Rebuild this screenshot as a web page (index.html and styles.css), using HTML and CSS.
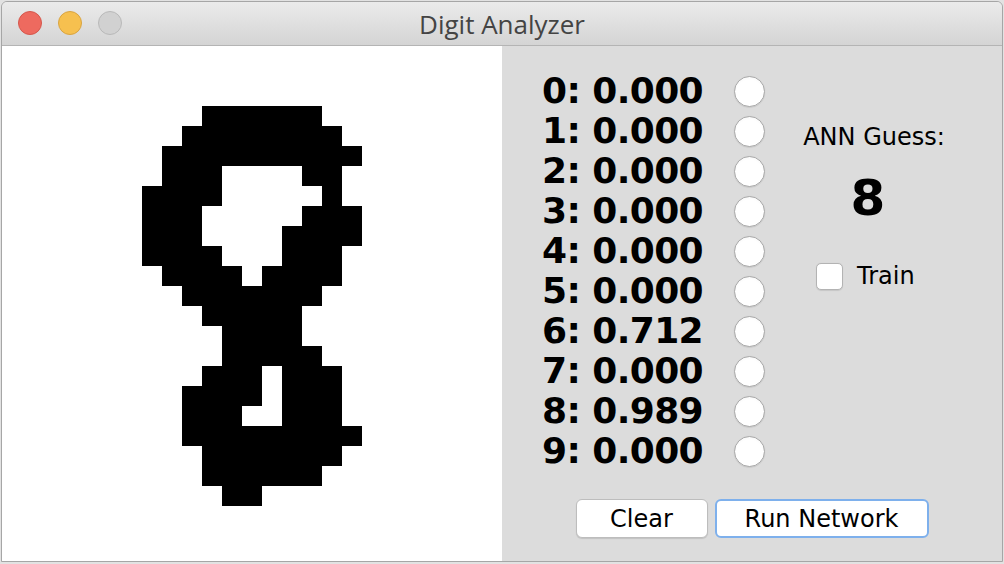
FILE: index.html
```html
<!DOCTYPE html>
<html>
<head>
<meta charset="utf-8">
<title>Digit Analyzer</title>
<link rel="stylesheet" href="styles.css">
</head>
<body>
<div class="window">
  <div class="titlebar">
    <div class="lights">
      <span class="light red"></span>
      <span class="light yellow"></span>
      <span class="light gray"></span>
    </div>
    <div class="title">Digit Analyzer</div>
  </div>
  <div class="content">
    <div class="canvas">
      <svg class="digit" width="500" height="515" viewBox="0 0 500 515">
        <g fill="#000">
          <rect x="200" y="60" width="120" height="20"/>
          <rect x="180" y="80" width="160" height="20"/>
          <rect x="160" y="100" width="200" height="20"/>
          <rect x="160" y="120" width="60" height="20"/>
          <rect x="300" y="120" width="40" height="20"/>
          <rect x="140" y="140" width="80" height="20"/>
          <rect x="320" y="140" width="20" height="20"/>
          <rect x="140" y="160" width="60" height="20"/>
          <rect x="300" y="160" width="60" height="20"/>
          <rect x="140" y="180" width="60" height="20"/>
          <rect x="280" y="180" width="80" height="20"/>
          <rect x="140" y="200" width="80" height="20"/>
          <rect x="280" y="200" width="60" height="20"/>
          <rect x="160" y="220" width="80" height="20"/>
          <rect x="260" y="220" width="80" height="20"/>
          <rect x="180" y="240" width="140" height="20"/>
          <rect x="200" y="260" width="100" height="20"/>
          <rect x="220" y="280" width="80" height="20"/>
          <rect x="220" y="300" width="100" height="20"/>
          <rect x="200" y="320" width="60" height="20"/>
          <rect x="280" y="320" width="60" height="20"/>
          <rect x="180" y="340" width="80" height="20"/>
          <rect x="280" y="340" width="60" height="20"/>
          <rect x="180" y="360" width="60" height="20"/>
          <rect x="280" y="360" width="60" height="20"/>
          <rect x="180" y="380" width="180" height="20"/>
          <rect x="200" y="400" width="140" height="20"/>
          <rect x="200" y="420" width="120" height="20"/>
          <rect x="220" y="440" width="40" height="20"/>
        </g>
      </svg>
    </div>
    <div class="panel">
      <div class="top">
        <div class="list">
          <div class="row"><span class="label">0: 0.000</span><span class="radio"></span></div>
          <div class="row"><span class="label">1: 0.000</span><span class="radio"></span></div>
          <div class="row"><span class="label">2: 0.000</span><span class="radio"></span></div>
          <div class="row"><span class="label">3: 0.000</span><span class="radio"></span></div>
          <div class="row"><span class="label">4: 0.000</span><span class="radio"></span></div>
          <div class="row"><span class="label">5: 0.000</span><span class="radio"></span></div>
          <div class="row"><span class="label">6: 0.712</span><span class="radio"></span></div>
          <div class="row"><span class="label">7: 0.000</span><span class="radio"></span></div>
          <div class="row"><span class="label">8: 0.989</span><span class="radio"></span></div>
          <div class="row"><span class="label">9: 0.000</span><span class="radio"></span></div>
        </div>
        <div class="side">
          <div class="guess-label">ANN Guess:</div>
          <div class="guess">8</div>
          <label class="check-row"><span class="checkbox"></span><span class="check-text">Train</span></label>
        </div>
      </div>
      <div class="buttons">
        <button class="btn clear">Clear</button>
        <button class="btn run">Run Network</button>
      </div>
    </div>
  </div>
</div>
</body>
</html>
```

FILE: styles.css
```css
html, body {
  margin: 0;
  padding: 0;
}
body {
  width: 1004px;
  height: 564px;
  background: #e2e2e2;
  overflow: hidden;
  font-family: "DejaVu Sans", "Liberation Sans", sans-serif;
}
.window {
  box-sizing: border-box;
  margin: 1px 0 0 1px;
  width: 1002px;
  height: 561px;
  border: 1px solid #a6a6a6;
  border-radius: 6px 6px 0 0;
  overflow: hidden;
  display: flex;
  flex-direction: column;
  background: #dcdcdc;
}
.titlebar {
  height: 43px;
  flex: none;
  border-bottom: 1px solid #b4b4b4;
  background: linear-gradient(#ebebeb, #d4d4d4);
  position: relative;
  display: flex;
  align-items: center;
  justify-content: center;
}
.lights {
  position: absolute;
  left: 16px;
  top: 9px;
  display: flex;
  gap: 16px;
}
.light {
  box-sizing: border-box;
  width: 24px;
  height: 24px;
  border-radius: 50%;
  display: block;
}
.light.red { background: #ee6a5f; border: 1px solid #d5574c; }
.light.yellow { background: #f6c04f; border: 1px solid #d9a441; }
.light.gray { background: #d1d1d1; border: 1px solid #b9b9b9; }
.title {
  font-family: "Open Sans", "Liberation Sans", sans-serif;
  font-size: 26px;
  color: #444;
  line-height: 30px;
  margin-top: 1px;
}
.content {
  flex: 1;
  display: flex;
}
.canvas {
  width: 500px;
  background: #fff;
  flex: none;
}
.digit { display: block; }
.panel {
  flex: 1;
  background: #dcdcdc;
  display: flex;
  flex-direction: column;
  padding-top: 25px;
}
.top {
  display: flex;
}
.list {
  margin-left: 40px;
  width: 224px;
}
.row {
  height: 40px;
  display: flex;
  align-items: center;
}
.label {
  width: 192px;
  font-weight: bold;
  font-size: 36px;
  line-height: 40px;
  letter-spacing: -0.6px;
  color: #000;
}
.radio {
  box-sizing: border-box;
  width: 31px;
  height: 31px;
  border-radius: 50%;
  border: 1px solid #a9a9a9;
  background: radial-gradient(circle at 50% 55%, #ffffff 60%, #efefef 100%);
  box-shadow: 0 0.5px 1px rgba(0,0,0,0.15);
}
.side {
  width: 216px;
  display: flex;
  flex-direction: column;
  align-items: center;
  padding-top: 52px;
}
.guess-label {
  font-size: 24px;
  line-height: 28px;
  color: #000;
}
.guess {
  margin-top: 18px;
  font-size: 50px;
  font-weight: bold;
  line-height: 58px;
  margin-right: 12px;
  color: #000;
}
.check-row {
  margin-top: 35px;
  align-self: flex-start;
  margin-left: 50px;
  display: flex;
  align-items: center;
  gap: 14px;
  height: 28px;
}
.checkbox {
  box-sizing: border-box;
  width: 27px;
  height: 27px;
  border-radius: 5px;
  border: 1px solid #b3b3b3;
  background: #fff;
  box-shadow: 0 0.5px 1px rgba(0,0,0,0.1);
}
.check-text {
  font-size: 24px;
  line-height: 28px;
  color: #000;
}
.buttons {
  margin-top: 28px;
  display: flex;
  justify-content: center;
  gap: 7px;
}
.btn {
  box-sizing: border-box;
  height: 39px;
  border-radius: 6px;
  background: #fff;
  font-family: "DejaVu Sans", "Liberation Sans", sans-serif;
  font-size: 24px;
  color: #000;
  padding: 0;
  border: 1px solid #bdbdbd;
  box-shadow: 0 1px 1px rgba(0,0,0,0.12);
}
.btn.clear { width: 132px; }
.btn.run {
  width: 214px;
  border: 2px solid #7eb0ec;
  box-shadow: none;
}
```
